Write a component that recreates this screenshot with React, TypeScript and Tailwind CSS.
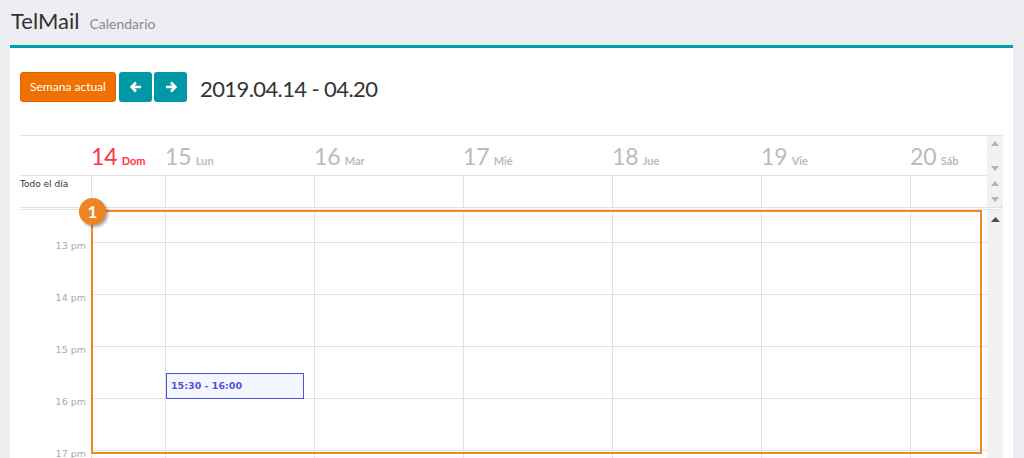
import React from "react";

const days = [
  { n: "14", d: "Dom", today: true },
  { n: "15", d: "Lun" },
  { n: "16", d: "Mar" },
  { n: "17", d: "Mié" },
  { n: "18", d: "Jue" },
  { n: "19", d: "Vie" },
  { n: "20", d: "Sáb" },
];

const hours = ["13 pm", "14 pm", "15 pm", "16 pm", "17 pm"];

const cols = "grid grid-cols-[71px_74px_149px_149px_149px_149px_149px_1fr]";

const UpDown = () => (
  <div className="flex h-full flex-col items-center justify-between py-[5px]">
    <svg width="8" height="5" viewBox="0 0 8 5"><path d="M0 5 L4 0 L8 5 Z" fill="#b5b5b5" /></svg>
    <svg width="8" height="5" viewBox="0 0 8 5"><path d="M0 0 L4 5 L8 0 Z" fill="#b5b5b5" /></svg>
  </div>
);

export default function App() {
  return (
    <div className="h-[458px] w-[1024px] overflow-hidden bg-[#eceef2] font-['Lato','Open_Sans',sans-serif]">
      <div className="flex items-baseline gap-[10px] px-[11px] pt-[4px] h-[45px]">
        <span className="text-[22px] text-[#333]">TelMail</span>
        <span className="text-[14px] text-[#8a8a8a]">Calendario</span>
      </div>

      <div className="ml-[10px] mr-[11px] bg-white border-t-[3px] border-[#00a2aa] px-[10px] pt-[24px] h-[500px]">
        <div className="flex items-center h-[30px]">
          <button className="h-[30px] w-[96px] rounded-[3px] bg-[#f07000] border border-[#e06400] text-white text-[12px]">
            Semana actual
          </button>
          <button className="ml-[3px] h-[30px] w-[33px] rounded-[3px] bg-[#0097a7] flex items-center justify-center">
            <svg width="12" height="12" viewBox="0 0 12 12"><path d="M11 6 H2 M6 1.5 L1.5 6 L6 10.5" stroke="white" strokeWidth="2.6" fill="none" /></svg>
          </button>
          <button className="ml-[2px] h-[30px] w-[33px] rounded-[3px] bg-[#0097a7] flex items-center justify-center">
            <svg width="12" height="12" viewBox="0 0 12 12"><path d="M1 6 H10 M6 1.5 L10.5 6 L6 10.5" stroke="white" strokeWidth="2.6" fill="none" /></svg>
          </button>
          <span className="ml-[13px] mt-[3px] text-[22px] text-[#333] tracking-[-0.6px]">2019.04.14 - 04.20</span>
        </div>

        <div className="mt-[33px] flex flex-col">
          {/* day header */}
          <div className="flex border-t border-[#e2e2e2] h-[41px]">
            <div className={`${cols} flex-1 border-b border-[#e2e2e2]`}>
              <div />
              {days.map((d) => (
                <div key={d.n} className="flex items-baseline pt-[7px] gap-[4px]">
                  <span className={`text-[23px] leading-[26px] ${d.today ? "text-[#ff3347]" : "text-[#bbbbbb]"}`}>{d.n}</span>
                  <span className={`text-[11px] font-bold ${d.today ? "text-[#ff3347]" : "text-[#bbbbbb]"}`}>{d.d}</span>
                </div>
              ))}
            </div>
            <div className="w-[16px] bg-[#f1f1f1]"><UpDown /></div>
          </div>

          {/* all day row */}
          <div className="flex h-[32px]">
            <div className={`${cols} flex-1 border-b border-[#e2e2e2]`}>
              <div className="pt-[2px] text-[9px] text-[#333] font-['DejaVu_Sans',sans-serif]">Todo el día</div>
              {days.map((d) => (
                <div key={d.n} className="border-l border-[#e2e2e2]" />
              ))}
            </div>
            <div className="w-[16px] bg-[#f1f1f1] border-b border-[#e2e2e2]"><UpDown /></div>
          </div>

          {/* body */}
          <div className="flex mt-[1px] border-t border-[#e2e2e2]">
            <div className={`${cols} flex-1 relative`}>
              <div className="flex flex-col">
                <div className="h-[32px]" />
                {hours.map((h) => (
                  <div key={h} className="h-[52px] pr-[5px] flex justify-end">
                    <div className="-mt-[2px] text-[9.5px] leading-[11px] text-[#aaa] font-['DejaVu_Sans',sans-serif]">{h}</div>
                  </div>
                ))}
              </div>
              {days.map((d, i) => (
                <div key={d.n} className="relative flex flex-col border-l border-[#e2e2e2]">
                  <div className="h-[32px]" />
                  {hours.map((h) => (
                    <div key={h} className="h-[52px] border-t border-[#e2e2e2]" />
                  ))}
                  {i === 1 && (
                    <div className="absolute left-0 top-[163px] w-[138px] h-[26px] border border-[#4b55d9] bg-[#f4f5fe] pl-[4px] flex items-center">
                      <span className="text-[9.5px] font-bold text-[#4b55d9] font-['DejaVu_Sans',sans-serif]">15:30 - 16:00</span>
                    </div>
                  )}
                </div>
              ))}

              {/* highlight overlay */}
              <div className="absolute left-[71px] top-0 w-[891px] h-[244px] border-2 border-[#f0882a]" />
              <div className="absolute left-[59px] top-[-12px] w-[27px] h-[27px] rounded-full bg-[#ed8423] shadow-[2px_2px_3px_rgba(0,0,0,0.35)] flex items-center justify-center">
                <span className="text-white font-bold text-[17px] leading-none">1</span>
              </div>
            </div>
            <div className="w-[16px] bg-[#f1f1f1] flex justify-center pt-[7px]">
              <svg width="9" height="5" viewBox="0 0 9 5"><path d="M0 5 L4.5 0 L9 5 Z" fill="#505050" /></svg>
            </div>
          </div>
        </div>
      </div>
    </div>
  );
}
